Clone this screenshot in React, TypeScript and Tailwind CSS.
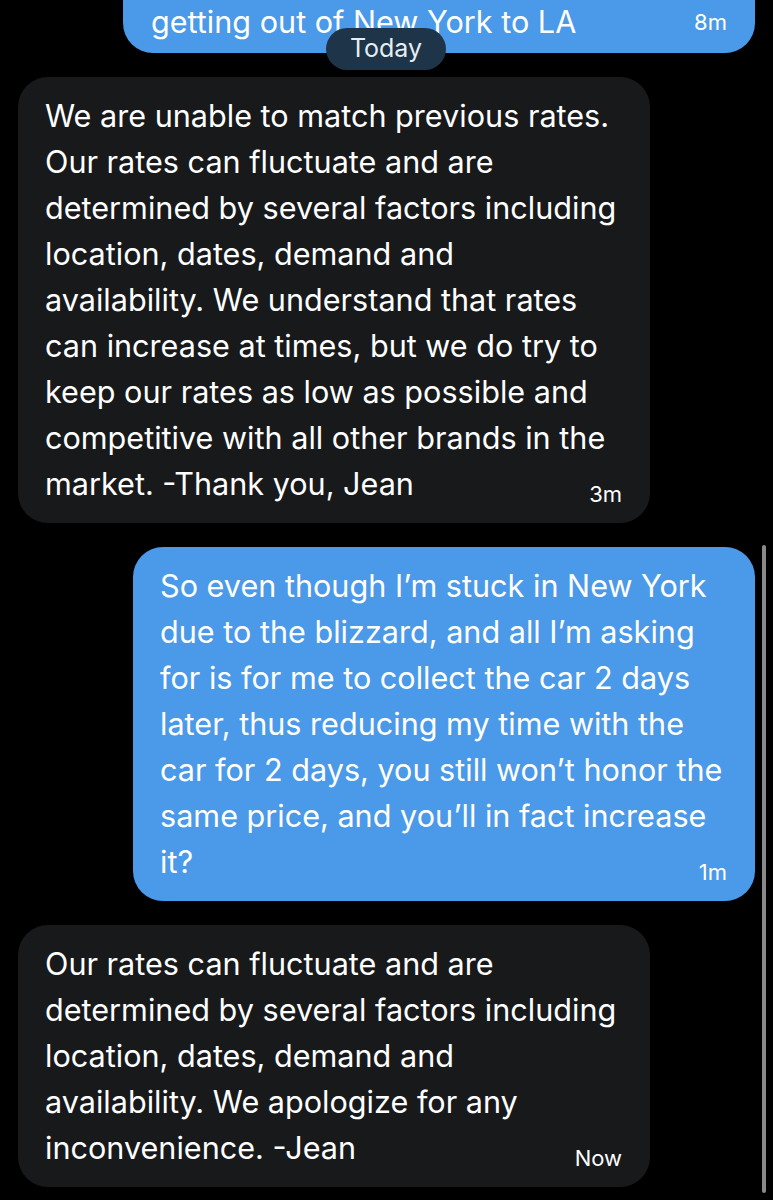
const font = { fontFamily: 'Inter, "Noto Sans", sans-serif' };

type Msg = {
  lines: string[];
  time: string;
  mine: boolean;
};

const messages: Msg[] = [
  {
    mine: false,
    time: '3m',
    lines: [
      'We are unable to match previous rates.',
      'Our rates can fluctuate and are',
      'determined by several factors including',
      'location, dates, demand and',
      'availability. We understand that rates',
      'can increase at times, but we do try to',
      'keep our rates as low as possible and',
      'competitive with all other brands in the',
      'market. -Thank you, Jean',
    ],
  },
  {
    mine: true,
    time: '1m',
    lines: [
      'So even though I’m stuck in New York',
      'due to the blizzard, and all I’m asking',
      'for is for me to collect the car 2 days',
      'later, thus reducing my time with the',
      'car for 2 days, you still won’t honor the',
      'same price, and you’ll in fact increase',
      'it?',
    ],
  },
  {
    mine: false,
    time: 'Now',
    lines: [
      'Our rates can fluctuate and are',
      'determined by several factors including',
      'location, dates, demand and',
      'availability. We apologize for any',
      'inconvenience. -Jean',
    ],
  },
];

function Bubble({ msg }: { msg: Msg }) {
  const last = msg.lines[msg.lines.length - 1];
  const rest = msg.lines.slice(0, -1);
  return (
    <div
      className={`rounded-[30px] pl-[27px] pr-[28px] pt-[16px] pb-[16px] text-white ${
        msg.mine ? 'ml-auto mr-[18px] w-[622px] bg-[#4b99e9]' : 'ml-[18px] w-[632px] bg-[#18191b]'
      }`}
    >
      {rest.map((line) => (
        <div key={line} className="whitespace-nowrap text-[30.6px] leading-[46px]">
          {line}
        </div>
      ))}
      <div className="flex items-end justify-between">
        <span className="whitespace-nowrap text-[30.6px] leading-[46px]">{last}</span>
        <span className="mb-[2px] text-[22px] leading-none">{msg.time}</span>
      </div>
    </div>
  );
}

export default function App() {
  return (
    <div className="relative h-[1200px] w-[773px] overflow-hidden bg-black" style={font}>
      <div className="flex flex-col gap-[24px]">
        {/* previous message, its top scrolled out of view */}
        <div className="ml-auto mr-[18px] -mt-[41px] w-[632px] rounded-[30px] bg-[#4b99e9] pl-[28px] pr-[28px] pt-[40px] pb-[8px] text-white">
          <div className="flex items-center justify-between">
            <span className="whitespace-nowrap text-[30.6px] leading-[46px]">getting out of New York to LA</span>
            <span className="text-[22px] leading-none">8m</span>
          </div>
        </div>

        {messages.map((m, i) => (
          <Bubble key={i} msg={m} />
        ))}
      </div>

      {/* sticky date header */}
      <div className="absolute left-[326px] top-[28px] flex h-[42px] w-[120px] items-center justify-center rounded-full bg-[#1d3449] text-[25px] text-[#e7edf3]">
        Today
      </div>

      {/* scrollbar */}
      <div className="absolute left-[762px] top-[545px] h-[648px] w-[4px] rounded-full bg-[#8a8a8a]" />
    </div>
  );
}
